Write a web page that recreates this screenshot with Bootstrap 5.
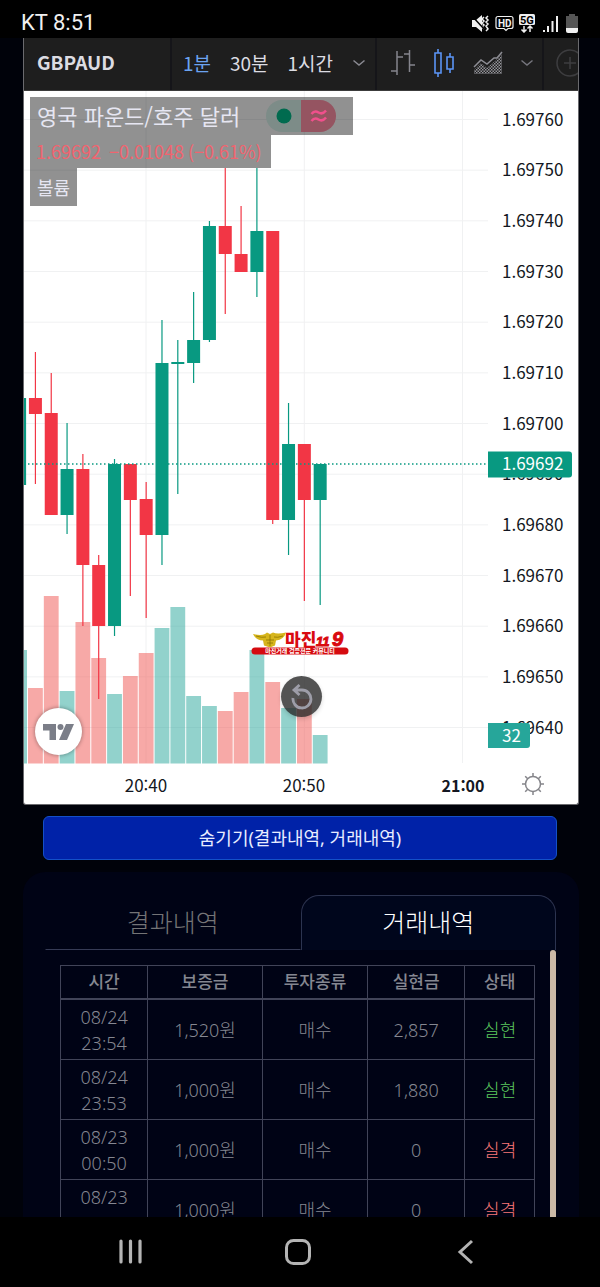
<!DOCTYPE html>
<html lang="ko">
<head>
<meta charset="utf-8">
<meta name="viewport" content="width=device-width, initial-scale=1">
<title>GBPAUD</title>
<link href="https://cdn.jsdelivr.net/npm/bootstrap@5.3.0/dist/css/bootstrap.min.css" rel="stylesheet">
<style>
  body { background: #00020a; font-family: "Noto Sans", "Noto Sans CJK KR", sans-serif; color: #858791; }
  button { color: inherit; }
  .kr { font-family: "Noto Sans CJK KR", sans-serif; }
  .status-bar { height: 38px; background: #000; color: #f0f0f0; font: 22px/38px Roboto, sans-serif; padding: 7px 20px 0 21px; }
  .status-bar svg { height: 20px; }
  .page-main { padding: 0 21px 0 23px; }
  .chart-frame { border: 1px solid #6a6a6e; border-top: 0; border-radius: 0 0 3px 3px; background: #fff; }
  .tools { height: 53px; background: #1e1e1e; color: #dcdce2; font-size: 19px; border-bottom: 1px solid #3c3c3c; }
  .tools > div { border-right: 2px solid #151519; flex: none; }
  .tools .btn-plain { line-height: 28px; white-space: nowrap; }
  .btn-plain { background: none; border: 0; padding: 0; }
  .cell-symbol { width: 148px; padding-left: 13px; }
  .cell-range { width: 205px; padding: 0 9px 2px 11px; }
  .cell-style { width: 167px; padding: 0 8px 2px 13px; }
  .cell-add { padding: 0 0 2px 12px; opacity: .3; }
  .on { color: #6ba3f0; }
  .legend { left: 6px; top: 6px; color: #e6e6f2; }
  .legend > div { background: rgba(0,0,0,.43); width: max-content; }
  .lg-name { height: 38px; font-size: 22px; line-height: 36px; padding: 0 17px 0 7px; }
  .lg-quote { height: 33px; font-size: 18px; line-height: 33px; padding: 0 9px 0 6px; color: #f0646f; }
  .lg-vol { height: 38px; font-size: 18px; line-height: 38px; padding: 0 7px; }
  .state { height: 32px; margin-left: 26px; border-radius: 16px; overflow: hidden; }
  .state i { width: 35px; height: 32px; display: flex; align-items: center; justify-content: center; background: #7d8c88; }
  .state i + i { background: #955461; }
  .float-logo { left: 11px; bottom: 49px; width: 47px; height: 47px; box-shadow: 0 0 4px rgba(0,0,0,.4); }
  .float-reset { left: 50%; bottom: 87px; width: 41px; height: 41px; margin-left: -20px; background: rgba(40,40,40,.8); box-shadow: 0 2px 4px rgba(0,0,0,.15); }
  .float-gear { right: 33px; bottom: 8px; }
  .chart text { font: 17px "Noto Sans CJK KR", sans-serif; fill: #131722; }
  .chart .inv { fill: #fff; }
  .chart .strong { font-weight: 700; font-size: 16px; }
  .chart .brand { font-weight: 900; font-size: 17px; fill: #d90a10; }
  .chart .digits { font: italic 900 13px "Liberation Sans", sans-serif; fill: #d90a10; stroke: #d90a10; }
  .chart .digits .big { font-size: 20px; }
  .chart .tag { font-weight: 700; font-size: 6px; fill: #fff; }
  .btn-hide { height: 44px; margin: 11px 22px 12px 20px; background: #0022a8; border: 1px solid #1450c8; border-radius: 6px; color: #e8ecff; font-size: 18px; }
  .history { background: #000315; border-radius: 22px 22px 0 0; padding: 23px 23px 0 22px; }
  .tabs button { height: 55px; font-size: 25px; font-weight: 300; background: none; border: 1px solid transparent; border-bottom-color: #363b55; color: #747476; }
  .tabs button.active { border-color: #2c3450; border-bottom: 0; border-radius: 18px 18px 0 0; background: #00061c; color: #fff; }
  .scroll-area { padding: 15px 15px 0 15px; }
  .thumb { width: 6px; flex: none; background: #cbb9a6; border-radius: 3px 3px 0 0; }
  .deals { table-layout: fixed; width: 100%; border-collapse: collapse; font-size: 18px; line-height: 26px; font-weight: 300; text-align: center; }
  .deals th, .deals td { border: 1px solid #414458; padding: 4px 0 3px; vertical-align: middle; }
  .deals th { font-weight: 500; font-size: 17px; border-bottom-width: 2px; padding: 3px 0; }
  .won { color: #5cc85e; } .lost { color: #fa7878; }
  .nav-keys { height: 70px; background: #000; flex: none; padding: 0 109px; }
</style>
</head>
<body class="vh-100 d-flex flex-column overflow-hidden">
<header class="status-bar d-flex justify-content-between align-items-center flex-shrink-0">
  <span>KT 8:51</span>
  <svg width="110" height="20" viewBox="470 12 110 20" aria-label="상태 표시">
    <g fill="#f0f0f0"><path d="M472 19h4l6-5v17l-6-5h-4z"/><path d="M566 17v-2h3v-2h6v2h3v6h-12z" fill="#555"/><path d="M566 20h12v8h-12z" fill="#555"/><path d="M566 27h12v3q0 2-2 2h-8q-2 0-2-2z"/>
    <rect x="519" y="13" width="16" height="11" rx="1.500"/>
    <path d="M543 29h2v2h-2zM547 25h2v6h-2zM551.500 20h2v11h-2zM556 15h2v16h-2z"/></g>
    <g fill="none" stroke="#f0f0f0" stroke-width="1.500"><path d="M484 16l-2 2 2 2-2 2 2 2-2 2 2 2M488 15l-2 2 2 2-2 2 2 2-2 2 2 3-2 2"/><path d="M472 15l13 14" stroke="#000" stroke-width="1.500"/><path d="M498 15.500h13q2 0 2 2v8q0 2-2 2h-3l-2 2-2-2h-6q-2 0-2-2v-8q0-2 2-2z" stroke-width="1.200"/><path d="M524 25v6M521.500 28.500l2.500 2.500 2.500-2.500M530 31v-6M527.500 27.500l2.500-2.500 2.500 2.500"/></g>
    <text x="498" y="25.500" font-family="Roboto" font-size="10" font-weight="700" fill="#f0f0f0">HD</text>
    <text x="520" y="22.500" font-family="Roboto" font-size="11" font-weight="700" fill="#000">5G</text>
  </svg>
</header>

<main class="page-main flex-grow-1 d-flex flex-column overflow-hidden">
  <section class="chart-frame flex-shrink-0">
    <div class="tools kr d-flex overflow-hidden">
      <div class="cell-symbol d-flex align-items-center pb-1"><button class="btn-plain fw-bold">GBPAUD</button></div>
      <div class="cell-range d-flex align-items-center justify-content-between">
        <button class="btn-plain on">1분</button><button class="btn-plain">30분</button><button class="btn-plain">1시간</button>
        <button class="btn-plain d-flex" aria-label="간격"><svg width="14" height="8" fill="none" stroke="#8a8a92" stroke-width="1.500"><path d="M1.500 1.500l5.500 4.500 5.500-4.500"/></svg></button>
      </div>
      <div class="cell-style d-flex align-items-center justify-content-between">
        <button class="btn-plain d-flex" aria-label="바"><svg width="26" height="28" fill="none" stroke="#85858d" stroke-width="1.500"><path d="M7 2v24M7 8h6M1 22h6M19.500 1v22M14 5h5.500M19.500 16H25"/></svg></button>
        <button class="btn-plain d-flex" aria-label="캔들"><svg width="22" height="30" fill="none" stroke="#5b94f5" stroke-width="1.600"><path d="M2 5h6v20H2zM5 1v4M5 25v4M14 9h6v12h-6zM17 5v4M17 21v4"/></svg></button>
        <button class="btn-plain d-flex" aria-label="영역"><svg width="30" height="24"><defs><pattern id="dots" width="3" height="3" patternUnits="userSpaceOnUse"><rect width="1.500" height="1.500" fill="#94949a"/><rect x="1.500" y="1.500" width="1.500" height="1.500" fill="#94949a"/></pattern></defs><path d="M1 19l7-7 6 5 8-7 7-7v20H1z" fill="url(#dots)"/><path d="M1 16l7-7 6 4 7-6h3l5-6" fill="none" stroke="#8d8d94" stroke-width="1.500"/></svg></button>
        <button class="btn-plain d-flex" aria-label="차트 종류"><svg width="14" height="8" fill="none" stroke="#75757d" stroke-width="1.500"><path d="M1.500 1.500l5.500 4.500 5.500-4.500"/></svg></button>
      </div>
      <div class="cell-add d-flex align-items-center"><button class="btn-plain d-flex" aria-label="비교"><svg width="28" height="28" fill="none" stroke="#85858d" stroke-width="1.500"><path d="M14 8v12M8 14h12"/><circle cx="14" cy="14" r="13"/></svg></button></div>
    </div>

    <div class="position-relative">
      <svg class="chart d-block w-100" viewBox="24 91 554 713" role="img" aria-label="GBPAUD">
        <g id="grid" stroke="#f0f1f2"></g>
        <g id="volume"></g>
        <g id="candles"></g>
        <path d="M24 464H488" stroke="#089981" stroke-width="1.300" stroke-dasharray="1.500 2.500"/>
        <g id="prices"></g>
        <path d="M488 451.500h81q3 0 3 3v20q0 3-3 3h-81z" fill="#089981"/>
        <text class="inv" x="502" y="470">1.69692</text>
        <path d="M488 723h39q3 0 3 3v19q0 3-3 3h-39z" fill="#26a69a"/>
        <text class="inv" x="502" y="742">32</text>
        <text x="146" y="792" text-anchor="middle">20:40</text>
        <text x="304" y="792" text-anchor="middle">20:50</text>
        <text class="strong" x="463" y="792" text-anchor="middle">21:00</text>
        <g>
          <path d="M253 634q8 2 12 0l2-1.500 3 1.500 3-1.500q4 2 13 0-2 7-10 8l-1 5-5 2-6-2-1-5q-7 0-10-6.500z" fill="#d6b51c"/>
          <path d="M256 636q6 2 10 1M283 636q-6 2-9 1M266 640h8M267 643h6M270 635v11" stroke="#8c7300" stroke-width=".8" fill="none"/>
          <rect x="251.500" y="647.500" width="97" height="7" rx="3.500" fill="#d50b10"/>
          <text class="brand" x="285" y="646">마진</text>
          <text class="digits" x="316" y="646">11<tspan class="big" x="332">9</tspan></text>
          <text class="tag" x="300" y="653" text-anchor="middle">마진거래 검증전문 커뮤니티</text>
        </g>
      </svg>

      <div class="legend kr position-absolute">
        <div class="lg-name d-flex">영국 파운드/호주 달러
          <span class="state d-flex align-self-center"><i><svg width="16" height="16"><circle cx="8" cy="8" r="7.500" fill="#006b4f"/></svg></i><i><svg width="18" height="16" fill="none" stroke="#f0508c" stroke-width="2.500"><path d="M1.500 6q3-4 7-1.500t7.500-2M1.500 13q3-4 7-1.500t7.500-2"/></svg></i></span>
        </div>
        <div class="lg-quote">1.69692&nbsp; −0.01048 (−0.61%)</div>
        <div class="lg-vol">볼륨</div>
      </div>
      <a href="#" class="float-logo position-absolute rounded-circle bg-white d-flex align-items-center justify-content-center" aria-label="TradingView"><svg width="32" height="16" fill="#7b7e88"><path d="M0 0h13v16H6.500V6.500H0z"/><circle cx="17.500" cy="3" r="3"/><path d="M23 0h8l-7 16h-8z"/></svg></a>
      <button class="btn-plain float-reset position-absolute rounded-circle d-flex align-items-center justify-content-center" aria-label="되돌리기"><svg width="24" height="26" fill="none" stroke="#9d9da8" stroke-width="2.800"><path d="M3 14a9 9 0 1 0 9-8H4M9.500 1L4 6l5.500 5"/></svg></button>
      <button class="btn-plain float-gear position-absolute d-flex" aria-label="설정"><svg width="24" height="24" viewBox="-12 -12 24 24" fill="none" stroke="#85858a" stroke-width="1.500"><circle r="7.500"/><path d="M0-7.500V-11M0 7.500V11M-7.500 0H-11M7.500 0H11M-5.300-5.300l-2.500-2.500M5.300 5.300l2.500 2.500M-5.300 5.300l-2.500 2.500M5.300-5.300l2.500-2.500"/></svg></button>
    </div>
  </section>

  <button class="btn-hide flex-shrink-0">숨기기(결과내역, 거래내역)</button>

  <section class="history flex-grow-1 d-flex flex-column overflow-hidden">
    <div class="tabs d-flex flex-shrink-0" role="tablist">
      <button class="w-50" role="tab">결과내역</button><button class="w-50 active" role="tab" aria-selected="true">거래내역</button>
    </div>
    <div class="d-flex flex-grow-1 overflow-hidden">
      <div class="scroll-area flex-grow-1">
        <table class="deals">
          <colgroup><col style="width:18.400%"><col style="width:24.200%"><col style="width:22.200%"><col style="width:20.500%"><col style="width:14.700%"></colgroup>
          <thead><tr><th>시간</th><th>보증금</th><th>투자종류</th><th>실현금</th><th>상태</th></tr></thead>
          <tbody>
            <tr><td>08/24<br>23:54</td><td>1,520원</td><td>매수</td><td>2,857</td><td class="won">실현</td></tr>
            <tr><td>08/24<br>23:53</td><td>1,000원</td><td>매수</td><td>1,880</td><td class="won">실현</td></tr>
            <tr><td>08/23<br>00:50</td><td>1,000원</td><td>매수</td><td>0</td><td class="lost">실격</td></tr>
            <tr><td>08/23<br>00:49</td><td>1,000원</td><td>매수</td><td>0</td><td class="lost">실격</td></tr>
          </tbody>
        </table>
      </div>
      <div class="thumb"></div>
    </div>
  </section>
</main>

<nav class="nav-keys d-flex justify-content-between align-items-center">
  <button class="btn-plain d-flex" aria-label="최근"><svg width="42" height="28" stroke="#b4b4b4" stroke-width="3.200" stroke-linecap="round"><path d="M12 3v21M21.500 3v21M31 3v21"/></svg></button>
  <button class="btn-plain d-flex" aria-label="홈"><svg width="28" height="28" fill="none" stroke="#b4b4b4" stroke-width="3"><rect x="2.500" y="2.500" width="23" height="23" rx="7"/></svg></button>
  <button class="btn-plain d-flex" aria-label="뒤로"><svg width="47" height="28" fill="none" stroke="#b4b4b4" stroke-width="3"><path d="M28 3L16 14l12 11"/></svg></button>
</nav>

<script>
  // [up, high, open/close top, open/close bottom, low, volume top]
  const bars = [
    [1,398,398,485,485,650],[0,352,398,414,484,688],[0,373,413,515,515,596],[1,423,469,515,534,691],
    [0,454,469,565,626,622],[0,555,565,626,699,658],[1,459,464,626,636,694],[0,464,464,500,596,676],
    [0,482,499,535,618,653],[1,320,363,535,565,628],[1,340,362,364,494,607],[1,292,340,363,383,696],
    [1,221,226,340,342,706],[0,168,226,254,314,711],[0,206,254,272,272,692],[1,168,231,272,297,650],
    [0,231,231,520,524,682],[1,403,444,520,555,708],[0,444,444,500,601,699],[1,464,464,500,605,735]];
  let volume = '', candles = '', grid = '', prices = '';
  bars.forEach(([up, hi, a, b, lo, v], i) => {
    const x = 19.6 + i * 15.82, c = up ? '#089981' : '#f23645';
    volume += `<rect x="${x - 7.4}" y="${v}" width="14.8" height="${763.5 - v}" fill="${up ? '#26a69a' : '#ef5350'}" opacity=".5"/>`;
    candles += `<path d="M${x} ${hi}V${lo}" stroke="${c}" stroke-width="1.2"/><rect x="${x - 6.5}" y="${a}" width="13" height="${b - a}" fill="${c}"/>`;
  });
  for (let i = 0; i < 13; i++) {
    const y = 119.5 + i * 50.67;
    grid += `<path d="M24 ${y}H488"/>`;
    prices += `<text x="502" y="${y + 6}">1.69${760 - i * 10}</text>`;
  }
  [146, 304.3, 462.5].forEach(x => grid += `<path d="M${x} 91V763"/>`);
  Object.entries({ grid, volume, candles, prices }).forEach(([id, html]) => document.getElementById(id).innerHTML = html);
</script>
<script src="https://cdn.jsdelivr.net/npm/bootstrap@5.3.0/dist/js/bootstrap.bundle.min.js"></script>
</body>
</html>
